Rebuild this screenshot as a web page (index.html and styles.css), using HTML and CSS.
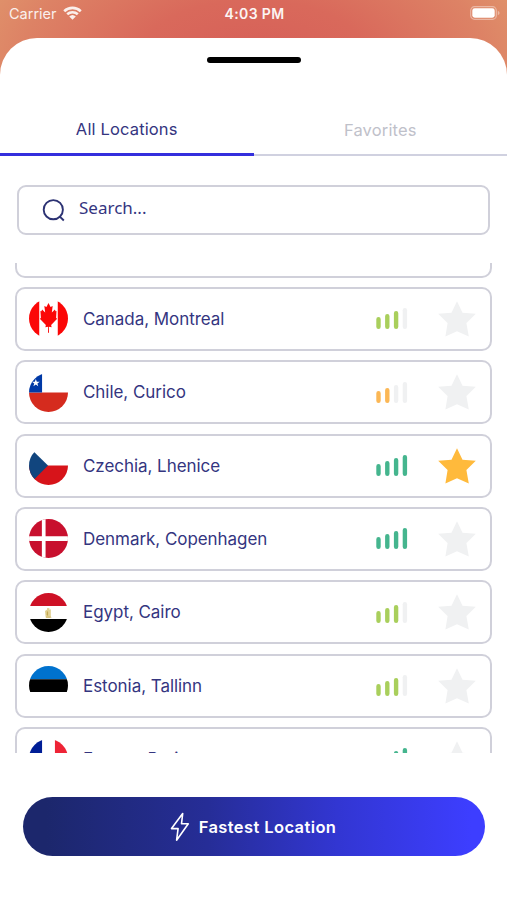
FILE: index.html
```html
<!DOCTYPE html>
<html lang="en">
<head>
<meta charset="utf-8">
<title>Locations</title>
<link rel="stylesheet" href="styles.css">
</head>
<body>
<svg class="defs" aria-hidden="true">
  <symbol id="star" viewBox="0 0 38 36"><path d="M19 .2l5.5 11.5 13.3 1.1-9.4 9.3 2.4 13.4L19 30.2 7.4 35.5l2.2-13.4L.2 12.8l13.3-1.1z"/></symbol>
</svg>
<header class="status">
  <div class="carrier"><span>Carrier</span>
    <svg class="wifi" viewBox="0 0 19 14"><path d="M1.2 5.2a12 12 0 0 1 16.6 0M4.2 8.3a7.7 7.7 0 0 1 10.6 0" fill="none" stroke="currentColor" stroke-width="2.6"/><path d="M9.5 13.8L6.2 10.6a4.8 4.8 0 0 1 6.6 0z" fill="currentColor"/></svg>
  </div>
  <div class="time">4:03 PM</div>
  <svg class="battery" viewBox="0 0 30 14"><rect x=".7" y=".7" width="25.6" height="12.6" rx="3.8" fill="none" stroke="#fff" stroke-opacity=".4" stroke-width="1.2"/><rect x="2.3" y="2.3" width="22.4" height="9.4" rx="2.4" fill="#fff"/><path d="M27.8 4.8v4.4q1.8-.7 1.8-2.2t-1.8-2.2z" fill="#fff" opacity=".4"/></svg>
</header>
<main class="sheet">
  <div class="grabber"></div>
  <nav class="tabs"><a class="tab active">All Locations</a><a class="tab">Favorites</a></nav>
  <div class="search">
    <svg class="lens" viewBox="0 0 24 24"><circle cx="11.3" cy="11.7" r="9.6"/><path d="M17.8 18.6l4 3.9"/></svg>
    <span>Search...</span>
  </div>
  <section class="list">
    <div class="row"></div>
    <div class="row">
      <svg class="flag" viewBox="0 0 40 40"><path fill="#fff" d="M0 0h40v40H0z"/><path fill="#fb0707" d="M0 0h10.5v40H0zM29.5 0H40v40H29.5zM20 4l2.1 4.2 2.2-1.1-.9 6.7 3.2-3 .6 1.8 1-.2-.4 7 1.1.9-6.2 6.3.5 2.3-2.8-.4.1 6h-1l.1-6-2.8.4.5-2.3-6.2-6.3 1.1-.9-.5-7 1.1.2.6-1.8 3.2 3-.9-6.7 2.2 1.1z"/></svg>
      <span class="name">Canada, Montreal</span>
      <svg class="signal good" viewBox="0 0 32 21"><path d="M2.5 11.3v7.4M11.3 8.3v10.4M20.1 5.3v13.4"/><path class="off" d="M28.9 2.3v16.4"/></svg><svg class="star"><use href="#star"/></svg>
    </div>
    <div class="row">
      <svg class="flag" viewBox="0 0 40 40"><path fill="#fff" d="M0 0h40v40H0z"/><path fill="#d52b1e" d="M0 20h40v20H0z"/><path fill="#0039a6" d="M0 0h13.4v20H0z"/><path fill="#fff" d="M7 6.2l1 2.8h3L8.6 10.8l.9 2.8L7 11.9l-2.5 1.7.9-2.8L3 9h3z"/></svg>
      <span class="name">Chile, Curico</span>
      <svg class="signal fair" viewBox="0 0 32 21"><path d="M2.5 11.3v7.4M11.3 8.3v10.4"/><path class="off" d="M20.1 5.3v13.4M28.9 2.3v16.4"/></svg><svg class="star"><use href="#star"/></svg>
    </div>
    <div class="row">
      <svg class="flag" viewBox="0 0 40 40"><path fill="#fff" d="M0 0h40v40H0z"/><path fill="#d7141a" d="M0 20h40v20H0z"/><path fill="#11457e" d="M0 1l19.5 19L0 39.5z"/></svg>
      <span class="name">Czechia, Lhenice</span>
      <svg class="signal" viewBox="0 0 32 21"><path d="M2.5 11.3v7.4M11.3 8.3v10.4M20.1 5.3v13.4M28.9 2.3v16.4"/></svg><svg class="star on"><use href="#star"/></svg>
    </div>
    <div class="row">
      <svg class="flag" viewBox="0 0 40 40"><path fill="#c8102e" d="M0 0h40v40H0z"/><path fill="#fff" d="M13.2 0H17v40h-3.8zM0 17.6h40v5H0z"/></svg>
      <span class="name">Denmark, Copenhagen</span>
      <svg class="signal" viewBox="0 0 32 21"><path d="M2.5 11.3v7.4M11.3 8.3v10.4M20.1 5.3v13.4M28.9 2.3v16.4"/></svg><svg class="star"><use href="#star"/></svg>
    </div>
    <div class="row">
      <svg class="flag" viewBox="0 0 40 40"><path fill="#fff" d="M0 0h40v40H0z"/><path fill="#ce1126" d="M0 0h40v13.4H0z"/><path d="M0 26.7h40V40H0z"/><path fill="#e2d193" d="M18.6 15.5l2.4.1-.2 1.7 1.6-.6v7.1l.8 1.6h-6l-.3-1.8-.5-5.2 2.2-1.5z"/><path fill="#c4a954" d="M18.4 18.5l1.2 1v4l-1.5-1zM17.6 24.4h4.6v.8h-4.6z"/></svg>
      <span class="name">Egypt, Cairo</span>
      <svg class="signal good" viewBox="0 0 32 21"><path d="M2.5 11.3v7.4M11.3 8.3v10.4M20.1 5.3v13.4"/><path class="off" d="M28.9 2.3v16.4"/></svg><svg class="star"><use href="#star"/></svg>
    </div>
    <div class="row">
      <svg class="flag" viewBox="0 0 40 40"><path fill="#fff" d="M0 0h40v40H0z"/><path fill="#0072ce" d="M0 0h40v13.7H0z"/><path d="M0 13.7h40v13H0z"/></svg>
      <span class="name">Estonia, Tallinn</span>
      <svg class="signal good" viewBox="0 0 32 21"><path d="M2.5 11.3v7.4M11.3 8.3v10.4M20.1 5.3v13.4"/><path class="off" d="M28.9 2.3v16.4"/></svg><svg class="star"><use href="#star"/></svg>
    </div>
    <div class="row">
      <svg class="flag" viewBox="0 0 40 40"><path fill="#fff" d="M0 0h40v40H0z"/><path fill="#001e96" d="M0 0h13.4v40H0z"/><path fill="#ee2436" d="M26.6 0H40v40H26.6z"/></svg>
      <span class="name">France, Paris</span>
      <svg class="signal" viewBox="0 0 32 21"><path d="M2.5 11.3v7.4M11.3 8.3v10.4M20.1 5.3v13.4M28.9 2.3v16.4"/></svg><svg class="star"><use href="#star"/></svg>
    </div>
  </section>
  <button class="fastest">
    <svg class="bolt" viewBox="0 0 20 30"><path d="M12.7 1.5L1.5 16.6h6.6L6.6 28.2 18.3 11.8h-6.8z"/></svg>
    <span>Fastest Location</span>
  </button>
</main>
</body>
</html>
```
FILE: styles.css
```css
* { box-sizing: border-box; }
body {
  margin: 0;
  height: 900px;
  overflow: hidden;
  font-family: Inter, "Liberation Sans", sans-serif;
  color: #34357f;
  background: radial-gradient(290px 150px at 50% 60px, #d65f58 0%, #d9695b 40%, #dd8265 80%, #e0936b 100%);
}
.defs { display: none; }
svg { display: block; flex: none; }
.status {
  height: 38px;
  padding: 5px 7px 0 9px;
  display: grid;
  grid-template-columns: 1fr auto 1fr;
  align-items: start;
  color: #fff;
  font-size: 14.5px;
  line-height: 18px;
}
.carrier { display: flex; gap: 6px; opacity: .88; }
.wifi { width: 19px; height: 14px; margin-top: 1px; }
.time { font-weight: 600; font-size: 14px; letter-spacing: .35px; opacity: .93; }
.battery { width: 30px; height: 14px; margin-top: 1px; justify-self: end; }
.sheet {
  height: 862px;
  display: flex;
  flex-direction: column;
  background: #fff;
  border-radius: 37px 37px 0 0;
}
.grabber {
  width: 94px;
  height: 6px;
  margin: 19px auto 0;
  border-radius: 3px;
  background: #000;
}
.tabs { display: flex; height: 93px; }
.tab {
  flex: 1;
  padding-top: 56px;
  text-align: center;
  font-size: 16.5px;
  line-height: 22px;
  letter-spacing: .15px;
  color: #bfc1ca;
  border-bottom: 2px solid #d0d1e0;
}
.tab.active { padding-top: 55px; color: #34357f; border-bottom: 3px solid #342fdd; }
.search {
  height: 50px;
  margin: 29px 17px 0 17px;
  padding: 0 0 0 23px;
  display: flex;
  align-items: center;
  gap: 13px;
  border: 2px solid #d0d0da;
  border-radius: 9px;
  font: 17px/24px "Noto Sans", sans-serif;
}
.search span { padding-bottom: 4px; }
.lens { width: 24px; height: 24px; fill: none; stroke: #2c3273; stroke-width: 1.9; }
.list {
  height: 490px;
  margin-top: 28px;
  padding: 0 15px;
  overflow: hidden;
}
.row {
  height: 64px;
  margin-bottom: 9.35px;
  padding: 0 14px 0 12px;
  display: flex;
  align-items: center;
  border: 2px solid #d0d0da;
  border-radius: 10px;
}
.row:first-child { margin-top: -49.5px; }
.flag { width: 39px; height: 39px; border-radius: 50%; }
.name {
  flex: 1;
  margin-left: 15px;
  font-size: 17px;
  line-height: 24px;
  letter-spacing: -.05px;
}
.signal {
  width: 32px;
  height: 21px;
  fill: none;
  stroke: #45b58e;
  stroke-width: 4.4;
  stroke-linecap: round;
}
.signal.good { stroke: #a9cf5c; }
.signal.fair { stroke: #fbb755; }
.signal .off { stroke: #f0f1f2; }
.star { width: 38px; height: 36px; margin-left: 30px; fill: #f0f1f2; }
.star.on { fill: #ffba3c; }
.fastest {
  height: 59px;
  margin: 44px 22px 0 23px;
  padding: 0 2px 0 0;
  display: flex;
  align-items: center;
  justify-content: center;
  gap: 9px;
  border: 0;
  border-radius: 30px;
  color: #fff;
  background: linear-gradient(90deg, #1c276c 5%, #262d97 40%, #3236d2 68%, #3d3eff 97%);
  font: 600 16.5px/24px Inter, sans-serif;
  letter-spacing: .4px;
}
.bolt { width: 20px; height: 30px; fill: none; stroke: #fff; stroke-width: 1.6; stroke-linejoin: round; }
```
